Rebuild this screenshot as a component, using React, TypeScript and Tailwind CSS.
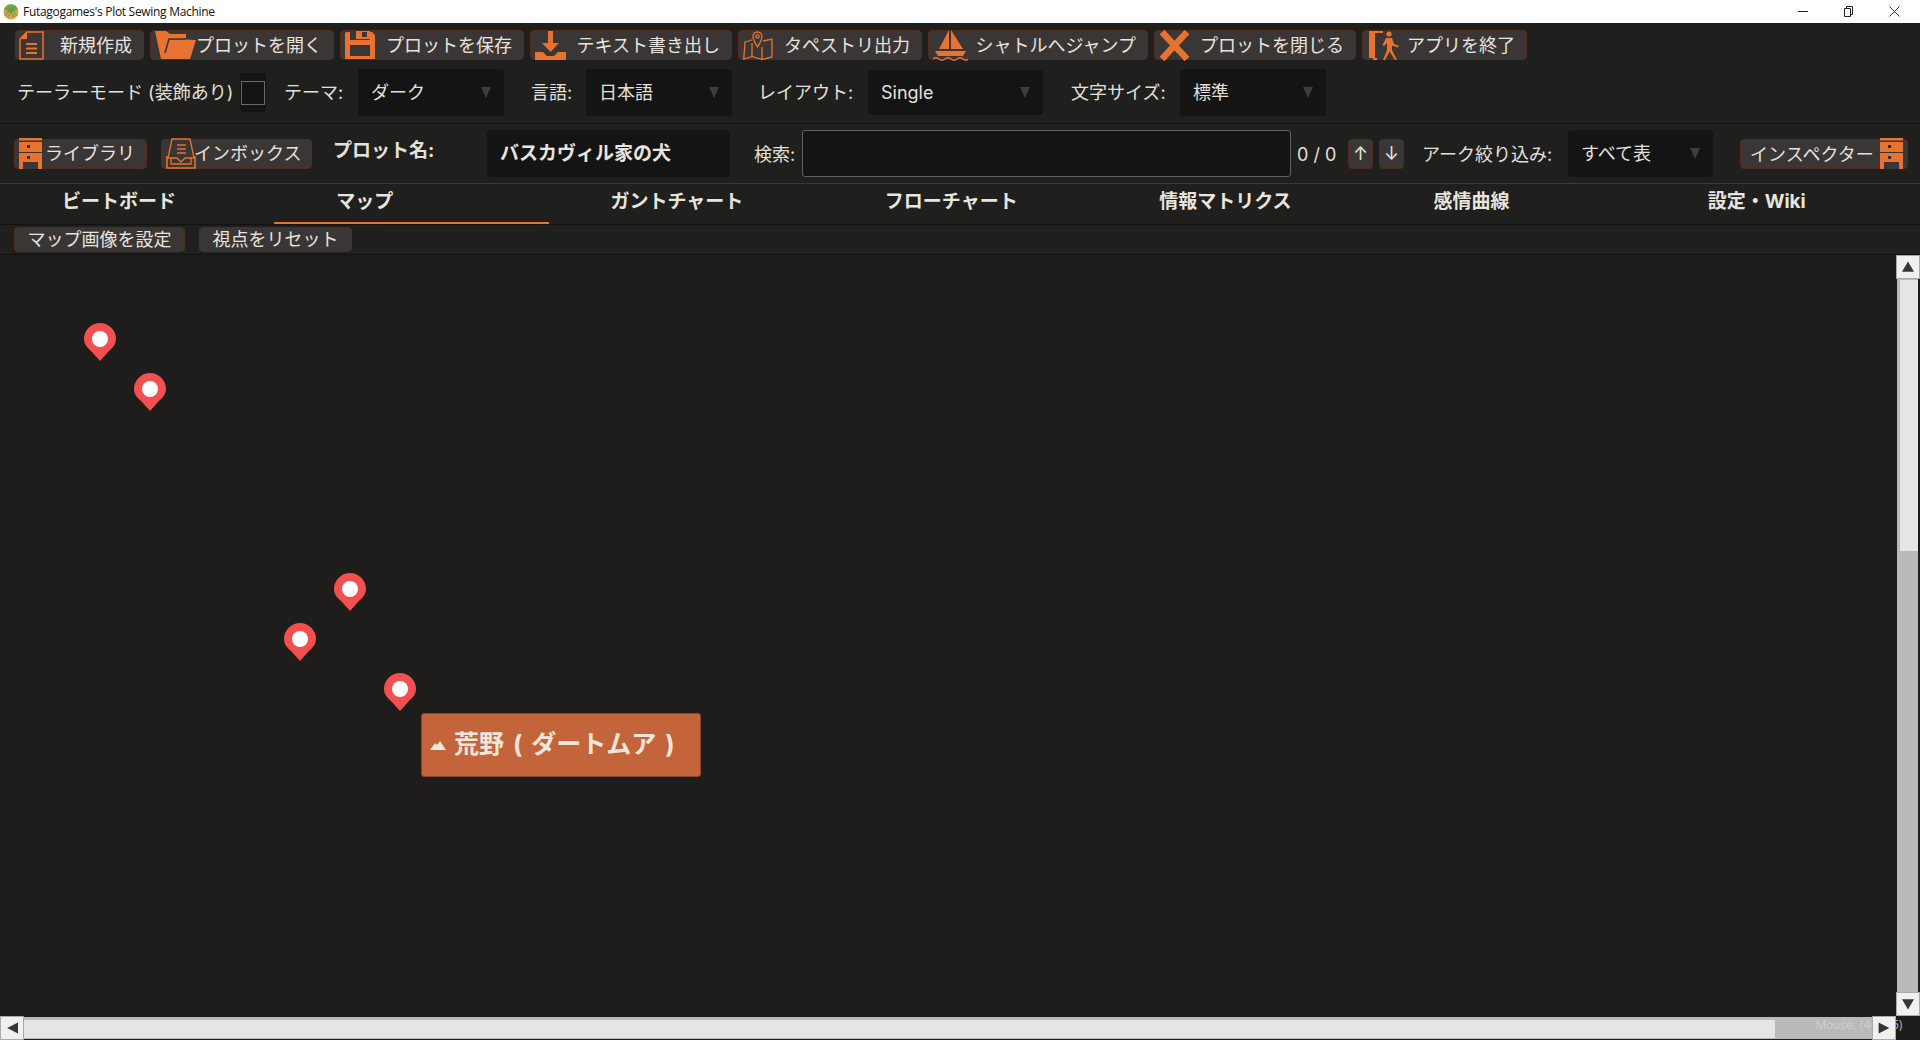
import React from "react";

const O = "#e8722f";

function IconDoc() {
  return (
    <svg width="25" height="29" viewBox="0 0 25 29" fill="none" className="-ml-[1px]">
      <path d="M8 1H24V28H1V8Z" stroke={O} strokeWidth="1.5" />
      <path d="M1 8L8 1V8Z" fill={O} />
      <path d="M7 13H18M7 17.5H18M7 22H18" stroke={O} strokeWidth="2" />
    </svg>
  );
}
function IconFolder() {
  return (
    <svg width="41" height="28" viewBox="0 0 41 28" fill="none">
      <path d="M0 0H11L15 3H31V8.5L41 9L35 28H6Z" fill={O} />
      <path d="M10 22L14 8H31" stroke="#3a3636" strokeWidth="1.6" />
      <path d="M14 8H31V8.5H14Z" fill="#3a3636" />
    </svg>
  );
}
function IconSave() {
  return (
    <svg width="30" height="30" viewBox="0 0 30 30">
      <path d="M1 2H5V10H25V2H27L30 5V29H0V3Z" fill={O} />
      <rect x="11" y="1" width="14" height="8" fill={O} />
      <rect x="17" y="2" width="5" height="5" fill="#3a3636" />
      <rect x="5" y="15" width="20" height="11" fill="#3a3636" />
    </svg>
  );
}
function IconDownload() {
  return (
    <svg width="31" height="31" viewBox="0 0 31 31">
      <path d="M13 1H18V13H24L15.5 22L7 13H13Z" fill={O} />
      <path d="M0 22H8L12 26H19L23 22H31V30H0Z" fill={O} />
    </svg>
  );
}
function IconMap() {
  return (
    <svg width="30" height="31" viewBox="0 0 30 31" fill="none" stroke={O} strokeWidth="1.3">
      <path d="M14.5 17C11.5 12 10 10 10 6.5A4.5 4.5 0 0 1 19 6.5C19 10 17.5 12 14.5 17Z" />
      <circle cx="14.5" cy="6.5" r="1.7" />
      <path d="M9 10L2 12L0.8 29L9 26.5L19 29.5L29 27V9L20 11" />
      <path d="M9 13V26.5M19 17V29.5" />
    </svg>
  );
}
function IconBoat() {
  return (
    <svg width="35" height="32" viewBox="0 0 35 32">
      <path d="M16 1V20H6Z" fill={O} />
      <path d="M18 1L30 20H18Z" fill={O} />
      <path d="M2 22H33L30 27H5Z" fill={O} />
      <path d="M0 30Q3 27.5 6 30T12 30T18 30T24 30T30 30T35 30" stroke={O} strokeWidth="1.4" fill="none" />
    </svg>
  );
}
function IconClose() {
  return (
    <svg width="31" height="31" viewBox="0 0 31 31">
      <path d="M3 2L28 29M28 2L3 29" stroke={O} strokeWidth="6.5" />
    </svg>
  );
}
function IconExit() {
  return (
    <svg width="34" height="31" viewBox="0 0 32 31" fill={O}>
      <path d="M1 1H15V3H7V28H9V30H5V28H1Z" />
      <circle cx="21" cy="4" r="2.6" />
      <path d="M18 8H24L26 14L31 16L30 17.5L24 15.5L24 20L29 30H27L21.5 21.5L17 30H15L19 20V13L16 16L14.5 15Z" />
    </svg>
  );
}
function IconDrawer() {
  return (
    <svg width="23" height="31" viewBox="0 0 23 31" fill={O} className="shrink-0">
      <rect x="0" y="0" width="23" height="2.5" />
      <rect x="0" y="4" width="23" height="10" />
      <rect x="0" y="15" width="23" height="16" />
      <rect x="8" y="7" width="3" height="3" fill="#3a2a22" />
      <rect x="8" y="18" width="3" height="3" fill="#3a2a22" />
      <rect x="4" y="24" width="15" height="7" fill="#3a3636" />
    </svg>
  );
}
function IconInbox() {
  return (
    <svg width="30" height="31" viewBox="0 0 30 31" fill="none" stroke={O} strokeWidth="1.3">
      <path d="M6 1H24L28 20H19L15 24L11 20H2Z" />
      <path d="M1 18V30H29V18" strokeWidth="1.6" />
      <path d="M11 7H20M11 11H20M11 15H20" />
      <path d="M5 20V26H25V20" />
    </svg>
  );
}

function Btn({
  w,
  icon,
  iconW,
  children,
  pr = "pr-[11px]",
}: {
  w: string;
  icon: React.ReactNode;
  iconW: string;
  children: React.ReactNode;
  pr?: string;
}) {
  return (
    <div className={`${w} ${pr} h-[30px] shrink-0 flex items-center bg-[#3a3636] border border-[#552c1b] rounded-[4px] pl-[4px] text-[18px] leading-none text-[#e8e4de] whitespace-nowrap`}>
      <div className={`${iconW} shrink-0 flex items-center [&>svg]:shrink-0`}>{icon}</div>
      <span className="ml-auto mt-[1px]">{children}</span>
    </div>
  );
}

function Sel({ w, h, label }: { w: string; h: string; label: string }) {
  return (
    <div className={`${w} ${h} shrink-0 bg-[#151415] rounded-[4px] flex items-center pl-[13px] pr-[13px] text-[18px] text-[#e4e1dc] justify-between`}>
      <span>{label}</span>
      <span className="w-0 h-0 border-l-[5px] border-r-[5px] border-t-[11px] border-l-transparent border-r-transparent border-t-[#3f3e3e]" />
    </div>
  );
}

function Pin({ x, y }: { x: string; y: string }) {
  return (
    <svg width="32" height="38" viewBox="0 0 32 38" className={`absolute ${x} ${y}`}>
      <path d="M16 0A16 16 0 0 1 32 16C32 22 28 25 24 29L16 38L8 29C4 25 0 22 0 16A16 16 0 0 1 16 0Z" fill="#f25050" />
      <circle cx="16" cy="16" r="8" fill="#ffffff" />
    </svg>
  );
}

function Tri({ dir }: { dir: "u" | "d" | "l" | "r" }) {
  const p = {
    u: "M10 1L20 18H0Z",
    d: "M0 2H20L10 19Z",
    l: "M20 1V19L2 10Z",
    r: "M1 1L19 10L1 19Z",
  }[dir];
  return (
    <svg width="12" height="12" viewBox="0 0 20 20" fill="#363636">
      <path d={p} />
    </svg>
  );
}

const tabs = ["ビートボード", "マップ", "ガントチャート", "フローチャート", "情報マトリクス", "感情曲線", "設定・Wiki"];

export default function App() {
  return (
    <div className="w-[1920px] h-[1040px] overflow-hidden flex flex-col bg-[#1f1f1e] font-['Inter','Noto_Sans_CJK_JP',sans-serif] text-[#e8e4de]">
      {/* Title bar */}
      <div className="h-[23px] shrink-0 bg-white flex items-center pl-[3px] text-black">
        <svg width="16" height="17" viewBox="0 0 16 17" className="shrink-0">
          <circle cx="8" cy="9" r="7.5" fill="#d9a24a" />
          <path d="M1 6A7.5 7.5 0 0 1 15 6L8 10Z" fill="#6fa84a" />
          <path d="M2 13L8 5L14 13M5 4L11 14M11 4L5 14" stroke="#5f9a45" strokeWidth="1" fill="none" />
        </svg>
        <span className="ml-[4px] text-[12px] leading-none font-['Open_Sans',sans-serif] text-[#111] tracking-[-0.3px]">Futagogames's Plot Sewing Machine</span>
        <div className="ml-auto flex items-center">
          <svg width="10" height="2" viewBox="0 0 10 2" className="mr-[35px]"><rect width="10" height="1" fill="#222" /></svg>
          <svg width="11" height="11" viewBox="0 0 11 11" fill="none" stroke="#222" className="mr-[35px]"><path d="M3.5 2.5V0.5H9.5V8.5H7.5M1.5 2.5H7.5V10.5H1.5Z" /></svg>
          <svg width="11" height="11" viewBox="0 0 11 11" fill="none" stroke="#222" strokeWidth="0.9" className="mr-[20px]"><path d="M0.5 0.5L10.5 10.5M10.5 0.5L0.5 10.5" /></svg>
        </div>
      </div>

      {/* Main toolbar */}
      <div className="shrink-0 flex gap-[6px] pl-[15px] pt-[7px]">
        <Btn w="w-[129px]" iconW="w-[25px]" icon={<IconDoc />}>新規作成</Btn>
        <Btn w="w-[184px]" iconW="w-[40px]" icon={<IconFolder />}>プロットを開く</Btn>
        <Btn w="w-[184px]" iconW="w-[30px]" icon={<IconSave />}>プロットを保存</Btn>
        <Btn w="w-[202px]" iconW="w-[31px]" icon={<IconDownload />}>テキスト書き出し</Btn>
        <Btn w="w-[184px]" iconW="w-[30px]" icon={<IconMap />}>タペストリ出力</Btn>
        <Btn w="w-[220px]" iconW="w-[35px]" icon={<IconBoat />}>シャトルへジャンプ</Btn>
        <Btn w="w-[202px]" iconW="w-[31px]" icon={<IconClose />}>プロットを閉じる</Btn>
        <Btn w="w-[165px]" iconW="w-[32px]" icon={<IconExit />}>アプリを終了</Btn>
      </div>

      {/* Settings row */}
      <div className="shrink-0 h-[64px] flex items-center pl-[17px] pt-[2px] text-[18px] text-[#e4e1dc] border-b border-[#111110] whitespace-nowrap">
        <span className="w-[223px] shrink-0">テーラーモード (装飾あり)</span>
        <div className="w-[26px] h-[39px] shrink-0 bg-[#151415] rounded-[3px] flex items-center justify-center">
          <div className="w-[24px] h-[24px] border border-[#6a6a6a] bg-[#151415]" />
        </div>
        <span className="ml-[18px] w-[74px] shrink-0">テーマ:</span>
        <Sel w="w-[146px]" h="h-[47px]" label="ダーク" />
        <span className="ml-[27px] w-[55px] shrink-0">言語:</span>
        <Sel w="w-[146px]" h="h-[47px]" label="日本語" />
        <span className="ml-[26px] w-[110px] shrink-0">レイアウト:</span>
        <Sel w="w-[175px]" h="h-[45px]" label="Single" />
        <span className="ml-[28px] w-[109px] shrink-0">文字サイズ:</span>
        <Sel w="w-[146px]" h="h-[47px]" label="標準" />
      </div>

      {/* Plot row */}
      <div className="shrink-0 h-[60px] flex items-center pl-[14px] text-[18px] text-[#e4e1dc] border-b border-[#3a3a38] whitespace-nowrap">
        <Btn w="w-[133px]" iconW="w-[23px]" icon={<IconDrawer />}>ライブラリ</Btn>
        <div className="ml-[14px]">
          <Btn w="w-[151px]" iconW="w-[30px]" icon={<IconInbox />} pr="pr-[11px]">
            <span className="relative right-[2px]">インボックス</span>
          </Btn>
        </div>
        <span className="ml-[21px] w-[154px] shrink-0 font-bold text-[19px] mb-[5px]">プロット名:</span>
        <div className="w-[243px] h-[47px] shrink-0 bg-[#151415] rounded-[4px] flex items-center pl-[13px] font-bold text-[19px] text-[#e8e4de]">
          <span className="mt-[1px]">バスカヴィル家の犬</span>
        </div>
        <span className="ml-[24px] w-[48px] shrink-0 mt-[1px]">検索:</span>
        <div className="w-[489px] h-[47px] shrink-0 bg-[#151415] border border-[#626262] rounded-[3px]" />
        <span className="ml-[6px] w-[51px] shrink-0 mt-[1px]">0 / 0</span>
        <div className="w-[25px] h-[30px] shrink-0 bg-[#3a3636] border border-[#552c1b] rounded-[4px] flex items-center justify-center text-[18px]">↑</div>
        <div className="ml-[6px] w-[25px] h-[30px] shrink-0 bg-[#3a3636] border border-[#552c1b] rounded-[4px] flex items-center justify-center text-[18px]">↓</div>
        <span className="ml-[18px] w-[146px] shrink-0 mt-[1px]">アーク絞り込み:</span>
        <Sel w="w-[145px]" h="h-[47px]" label="すべて表" />
        <div className="ml-[27px] w-[168px] h-[30px] shrink-0 flex items-center bg-[#3a3636] border border-[#552c1b] rounded-[4px] pl-[9px] pr-[4px] justify-between">
          <span className="mt-[1px]">インスペクター</span>
          <IconDrawer />
        </div>
      </div>

      {/* Tabs */}
      <div className="shrink-0 h-[41px] grid grid-cols-7 border-b border-[#111110]">
        {tabs.map((t, i) => (
          <div key={t} className={`pl-[62px] flex items-center font-bold text-[19px] text-[#e8e4de] whitespace-nowrap h-[40px] ${i === 1 ? "border-b-2 border-[#e8722f]" : ""}`}>
            <span className={i === 1 ? "mb-[2px]" : "mb-[4px]"}>{t}</span>
          </div>
        ))}
      </div>

      {/* Sub toolbar */}
      <div className="shrink-0 h-[30px] flex items-center pl-[14px] gap-[14px] border-b border-[#111110] text-[18px] whitespace-nowrap">
        <div className="w-[171px] h-[25px] bg-[#3a3636] border border-[#552c1b] rounded-[4px] flex items-center justify-center">マップ画像を設定</div>
        <div className="w-[153px] h-[25px] bg-[#3a3636] border border-[#552c1b] rounded-[4px] flex items-center justify-center">視点をリセット</div>
      </div>

      {/* Map canvas */}
      <div className="relative flex-1 min-h-0 bg-[#1e1d1c] overflow-hidden">
        <Pin x="left-[84px]" y="top-[68px]" />
        <Pin x="left-[134px]" y="top-[118px]" />
        <Pin x="left-[334px]" y="top-[318px]" />
        <Pin x="left-[284px]" y="top-[368px]" />
        <Pin x="left-[384px]" y="top-[418px]" />

        <div className="absolute left-[421px] top-[458px] w-[280px] h-[64px] bg-[#c4643a] border border-[#8a452a] rounded-[3px] flex items-center pl-[8px] text-[#efe7dc] font-bold text-[25px] whitespace-nowrap">
          <svg width="16" height="9" viewBox="0 0 16 9" fill="#efe7dc" className="shrink-0 mt-[1px]">
            <path d="M0 9L5 2L7 4L10 0L16 9Z" />
          </svg>
          <span className="ml-[8px] [word-spacing:3px]">荒野 ( ダートムア )</span>
        </div>

        {/* Vertical scrollbar */}
        <div className="absolute right-0 top-0 bottom-[24px] w-[24px] flex flex-col bg-[#1e1d1c]">
          <div className="h-[24px] shrink-0 bg-[#f0f0f0] border border-[#a9a9a9] flex items-center justify-center"><Tri dir="u" /></div>
          <div className="flex-1 bg-[#b9b9b9] ml-[1px] mr-[2px] pt-[1px] pl-[3px]">
            <div className="h-[271px] bg-[#e5e5e5]" />
          </div>
          <div className="h-[24px] shrink-0 bg-[#f0f0f0] border border-[#a9a9a9] flex items-center justify-center"><Tri dir="d" /></div>
        </div>

        {/* Horizontal scrollbar */}
        <div className="absolute left-0 right-[24px] bottom-0 h-[24px] flex bg-[#1e1d1c]">
          <div className="w-[24px] shrink-0 bg-[#f0f0f0] border border-[#a9a9a9] flex items-center justify-center"><Tri dir="l" /></div>
          <div className="flex-1 bg-[#b9b9b9] my-[1px] pt-[3px] pb-[1px]">
            <div className="w-[1751px] h-full bg-[#e5e5e5]" />
          </div>
          <div className="relative z-20 w-[24px] shrink-0 bg-[#f0f0f0] border border-[#a9a9a9] flex items-center justify-center"><Tri dir="r" /></div>
        </div>

        <span className="absolute z-10 right-[17px] bottom-[9px] text-[12px] tracking-[-0.2px] leading-none text-[#d4d4d4]/80 whitespace-nowrap">Mouse: (40, 35)</span>
      </div>
    </div>
  );
}
